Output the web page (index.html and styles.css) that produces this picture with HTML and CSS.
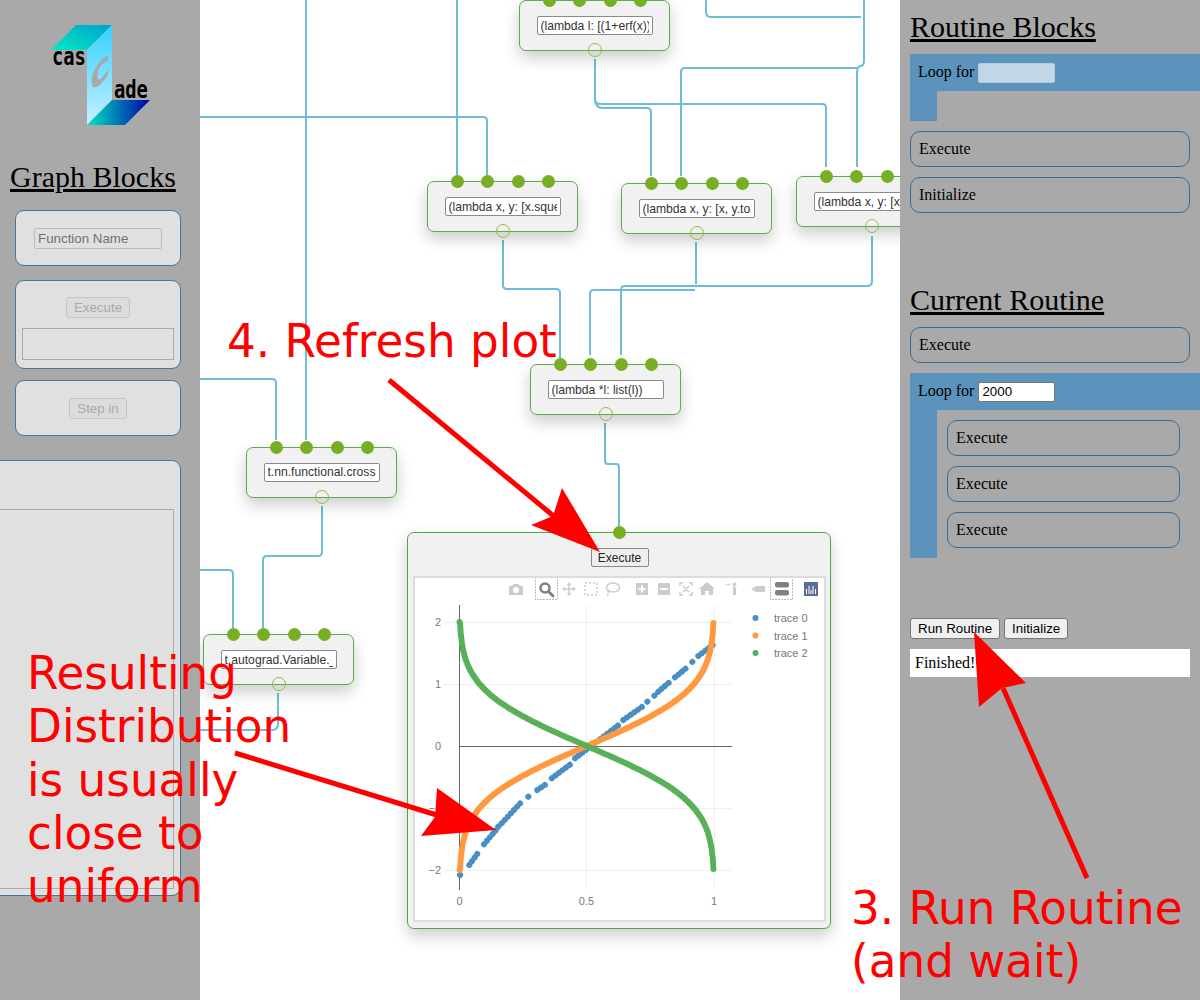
FILE: index.html
```html
<!DOCTYPE html>
<html lang="en">
  <head>
    <meta charset="UTF-8" />
    <meta name="viewport" content="width=device-width, initial-scale=1.0" />
    <title>Cascade</title>
    <link rel="stylesheet" href="styles.css">
  </head>
  <body>
    <div class="app">
      <aside class="graph-blocks">
        <svg class="logo" width="100" height="100" viewBox="50 25 100 100">
          <defs>
            <linearGradient id="logoTop" x1="0" y1="1" x2="1" y2="0">
              <stop offset="0" stop-color="#00ecc4" />
              <stop offset="1" stop-color="#00a0cc" />
            </linearGradient>
            <linearGradient id="logoFace" x1="0" y1="0" x2="0" y2="1">
              <stop offset="0" stop-color="#35d0ff" />
              <stop offset="1" stop-color="#c8f0ff" />
            </linearGradient>
            <linearGradient id="logoBottom" x1="0" y1="0" x2="1" y2="0">
              <stop offset="0" stop-color="#00e8c4" />
              <stop offset="1" stop-color="#0000a8" />
            </linearGradient>
          </defs>
          <polygon points="51,50 76,25 112,25 87,50" fill="url(#logoTop)" />
          <polygon points="87,50 112,25 112,100 87,125" fill="url(#logoFace)" />
          <polygon points="87,125 112,100 150,100 125,125" fill="url(#logoBottom)" />
          <text class="logo-word" transform="matrix(1 0 0 1.280 52 65)">cas</text>
          <text class="logo-word" transform="matrix(1 0 0 1.280 114 98)">ade</text>
          <text class="logo-c" transform="matrix(1 -1 0 1.160 91 93)">C</text>
        </svg>
        <h2 class="side-title">Graph Blocks</h2>
        <div class="block-card card-name">
          <input class="name-input" type="text" placeholder="Function Name" />
        </div>
        <div class="block-card card-exec">
          <button class="dim-btn" disabled>Execute</button>
          <div class="exec-box"></div>
        </div>
        <div class="block-card card-step">
          <button class="dim-btn" disabled>Step in</button>
        </div>
        <div class="block-card card-plot">
          <div class="plot-box"></div>
        </div>
      </aside>

      <main class="canvas">
        <svg class="wires" width="700" height="1000" viewBox="200 0 700 1000">
          <path d="M457 0V175" />
          <path d="M200 117H483q4 0 4 4V175" />
          <path d="M595 59V99q0 5 5 5H822q4 0 4 4V167" />
          <path d="M595 99q0 9 8 9H647q4 0 4 4V176" />
          <path d="M681 176V72q0 -4 4 -4H857" />
          <path d="M857 167V72q0 -4 3 -6q4 0 4 -5V0" />
          <path d="M706 0V12q0 5 5 5H861" />
          <path d="M306 0V440" />
          <path d="M200 379H272q4 0 4 4V440" />
          <path d="M322 506V552q0 4 -4 4H267q-4 0 -4 4V628" />
          <path d="M200 570H229q4 0 4 4V628" />
          <path d="M278 693V724q0 6 -6 6H200" />
          <path d="M503 240V285q0 4 4 4H556q4 0 4 4V358" />
          <path d="M696 242V284" />
          <path d="M695 290H594q-4 0 -4 4V355" />
          <path d="M872 236V281q0 5 -5 5H625q-4 0 -4 4V355" />
          <path d="M605 423V461q0 3 3 3H616q3 0 3 3V526" />
        </svg>

        <div class="node node-a">
          <div class="ports"><span></span><span></span><span></span><span></span></div>
          <input class="fn-input" type="text" value="(lambda l: [(1+erf(x))/2 for x in l])" />
          <span class="out-port"></span>
        </div>
        <div class="node node-b">
          <div class="ports"><span></span><span></span><span></span><span></span></div>
          <input class="fn-input" type="text" value="(lambda x, y: [x.squeeze(), y])" />
          <span class="out-port"></span>
        </div>
        <div class="node node-c">
          <div class="ports"><span></span><span></span><span></span><span></span></div>
          <input class="fn-input" type="text" value="(lambda x, y: [x, y.tolist()])" />
          <span class="out-port"></span>
        </div>
        <div class="node node-d">
          <div class="ports"><span></span><span></span><span></span><span></span></div>
          <input class="fn-input" type="text" value="(lambda x, y: [x, y])" />
          <span class="out-port"></span>
        </div>
        <div class="node node-e">
          <div class="ports"><span></span><span></span><span></span><span></span></div>
          <input class="fn-input" type="text" value="(lambda *l: list(l))" />
          <span class="out-port"></span>
        </div>
        <div class="node node-f">
          <div class="ports"><span></span><span></span><span></span><span></span></div>
          <input class="fn-input" type="text" value="t.nn.functional.cross" />
          <span class="out-port"></span>
        </div>
        <div class="node node-g">
          <div class="ports"><span></span><span></span><span></span><span></span></div>
          <input class="fn-input" type="text" value="t.autograd.Variable._" />
          <span class="out-port"></span>
        </div>

        <div class="plot-node">
          <span class="plot-port"></span>
          <button class="plot-exec">Execute</button>
          <div class="plot-area">
            <svg class="plot-svg" width="411" height="343" viewBox="414 577 411 343">
              <defs>
                <path id="curve" d="M459.500 870L460.100 869 460.700 858.900 462 848 463.300 841.100 465.800 831.900 469.100 823.900 472.200 818.100 478.600 809.100 484.900 802.200 491.300 796.400 497.600 791.400 504 787 510.400 782.900 523.100 775.600 535.800 769 548.500 762.900 561.300 757.100 574 751.500 586.750 746 599.500 740.500 612.200 734.900 625 729.100 637.700 723 650.400 716.400 663.100 709.100 669.500 705 675.900 700.600 682.200 695.600 688.600 689.800 694.900 682.900 701.300 673.900 704.400 668.100 707.700 660.100 710.200 650.900 711.500 644 712.800 633.100 713.400 623 714 622" />
              </defs>

              <!-- toolbar -->
              <g class="tool-off">
                <path d="M509 586h3l1.500 -2h5l1.500 2h3v9h-14z" />
                <circle cx="516" cy="590" r="3" fill="#fff" />
                <path d="M569 582l2.500 3h-1.800v3.300h3.300v-1.800l3 2.500 -3 2.500v-1.800h-3.300v3.300h1.800l-2.500 3 -2.500 -3h1.800v-3.300h-3.300v1.800l-3 -2.500 3 -2.500v1.800h3.300v-3.300h-1.800z" />
                <path d="M636 583h12v12h-12zM641 585.500v2.500h-2.500v2h2.500v2.500h2v-2.500h2.500v-2h-2.500v-2.500z" fill-rule="evenodd" />
                <path d="M658 583h12v12h-12zM660.500 588v2h7v-2z" fill-rule="evenodd" />
                <path d="M707 582l8 7h-2v6h-4v-4h-4v4h-4v-6h-2z" />
                <path d="M765 586h-9l-5 3 5 3h9z" />
                <rect x="733" y="587" width="3" height="8" />
                <circle cx="734.500" cy="584.500" r="2" />
                <circle cx="729" cy="584.500" r="1" />
                <circle cx="726.500" cy="584.500" r="1" />
              </g>
              <g class="tool-line">
                <rect x="585" y="583" width="12" height="12" stroke-dasharray="2 2" />
                <ellipse cx="613" cy="587.500" rx="6.500" ry="4.500" />
                <path d="M608 591q1 3 -1 5" stroke-dasharray="2 1" />
                <path d="M680 586v-3h3M689 583h3v3M692 592v3h-3M683 595h-3v-3M683 586l6 6M689 586l-6 6" />
              </g>
              <rect class="tool-box" x="535.500" y="577.500" width="22" height="22" />
              <rect class="tool-box" x="770.500" y="577.500" width="22" height="22" />
              <g class="tool-on">
                <circle cx="545" cy="588" r="4.500" fill="none" stroke="#808080" stroke-width="2.500" />
                <path d="M548.500 591.500l4.500 4.500" fill="none" stroke="#808080" stroke-width="3" stroke-linecap="round" />
                <rect x="775" y="582" width="14" height="5.500" rx="2" />
                <rect x="775" y="590" width="14" height="5.500" rx="2" />
              </g>
              <rect x="804" y="582" width="14" height="14" fill="#5b6e95" />
              <path d="M806.500 589v5M809 586v8M811 590v4M813 586v8M815.500 589v5" stroke="#fff" stroke-width="1" />

              <!-- grid -->
              <g class="grid">
                <path d="M444 622.500H732M444 684.500H732M444 808.500H732M444 870.500H732" />
                <path d="M586.500 605V890M714.500 605V890" />
              </g>
              <path class="zero" d="M459.500 605V890M459 746.500H732" />

              <!-- traces -->
              <path class="trace trace-blue" d="M460 875L462.700 871.700M469.300 865L477.700 853.300M484 844.300L496 830M498.300 826.700L498.400 826.600M501.700 823.300L521.700 801.700M528.300 796.700L528.400 796.600M537.300 790L548.300 782.700M551.700 778.300L571.700 763.300M575 758.300L620 724M623.300 720L643.300 706M647.300 701.700L647.400 701.600M654.300 695.700L654.400 695.600M658.300 691.700L670 681.700M675 677.300L686.700 667.700M692.300 662L692.400 661.900M698.300 656L714 644" />
              <use class="trace trace-orange" href="#curve" />
              <use class="trace trace-green" href="#curve" transform="matrix(1 0 0 -1 0 1492)" />

              <!-- tick labels -->
              <g class="tick">
                <text class="tick-y" x="441" y="626">2</text>
                <text class="tick-y" x="441" y="688">1</text>
                <text class="tick-y" x="441" y="750">0</text>
                <text class="tick-y" x="441" y="812">−1</text>
                <text class="tick-y" x="441" y="874">−2</text>
                <text class="tick-x" x="459.500" y="905">0</text>
                <text class="tick-x" x="586.500" y="905">0.5</text>
                <text class="tick-x" x="714" y="905">1</text>
              </g>

              <!-- legend -->
              <circle cx="755.500" cy="618" r="3" fill="#4a8fc4" />
              <circle cx="755.500" cy="635.500" r="3" fill="#ff983e" />
              <circle cx="755.500" cy="653" r="3" fill="#58b058" />
              <g class="legend">
                <text x="774" y="622">trace 0</text>
                <text x="774" y="640">trace 1</text>
                <text x="774" y="657">trace 2</text>
              </g>
            </svg>
          </div>
        </div>
      </main>

      <aside class="routine-panel">
        <h2 class="side-title">Routine Blocks</h2>
        <div class="loop">
          <div class="loop-head">Loop for <input class="loop-input loop-input-dim" type="text" /></div>
          <div class="loop-body loop-body-empty"></div>
        </div>
        <div class="routine-item">Execute</div>
        <div class="routine-item">Initialize</div>

        <h2 class="side-title current-title">Current Routine</h2>
        <div class="routine-item">Execute</div>
        <div class="loop">
          <div class="loop-head">Loop for <input class="loop-input" type="text" value="2000" /></div>
          <div class="loop-body">
            <div class="routine-item">Execute</div>
            <div class="routine-item">Execute</div>
            <div class="routine-item">Execute</div>
          </div>
        </div>

        <div class="run-row">
          <button class="run-btn">Run Routine</button>
          <button class="run-btn">Initialize</button>
        </div>
        <div class="run-result">Finished!</div>
      </aside>
    </div>

    <!-- red notes painted on top of the screenshot -->
    <svg class="arrows" width="1200" height="1000" viewBox="0 0 1200 1000">
      <path d="M389 380L556 518M235 753L440 816M1087 878L1003 688" />
      <polygon points="562,488 600,552 531,525 553,516" />
      <polygon points="437,788 496,830 421,836 435,817" />
      <polygon points="974,632 1026,683 1002,688 979,707" />
    </svg>
    <div class="note note-refresh">4. Refresh plot</div>
    <div class="note note-dist">Resulting<br />Distribution<br />is usually<br />close to<br />uniform</div>
    <div class="note note-run">3. Run Routine<br />(and wait)</div>
  </body>
</html>
```

FILE: styles.css
```css
body {
  margin: 0;
  font-family: "Liberation Serif", serif;
  font-size: 16px;
  color: #000;
  background: #fff;
}

.app {
  display: grid;
  grid-template-columns: 200px 700px 300px;
  width: 1200px;
  height: 1000px;
  overflow: hidden;
}

/* sidebars */
.graph-blocks,
.routine-panel {
  background-color: #a9a9a9;
  height: 1000px;
  overflow: hidden;
  box-sizing: border-box;
}

.side-title {
  margin: 0 0 10px;
  font-size: 30px;
  font-weight: normal;
  line-height: 34px;
  text-decoration: underline;
}

.graph-blocks {
  padding: 25px 19px 0 15px;
}

.graph-blocks .side-title {
  margin: 35px 0 16px -5px;
  white-space: nowrap;
}

.logo {
  display: block;
  margin-left: 35px;
}

.logo-word {
  font-family: "DejaVu Sans Mono", monospace;
  font-size: 18.800px;
  font-weight: bold;
  fill: #000;
}

.logo-c {
  font-family: "DejaVu Sans", sans-serif;
  font-size: 25px;
  font-weight: bold;
  fill: #a9a9a9;
  stroke: #a9a9a9;
  stroke-width: 0.800;
}

.block-card {
  display: flex;
  flex-direction: column;
  align-items: center;
  justify-content: center;
  box-sizing: border-box;
  width: 166px;
  margin-bottom: 14px;
  background-color: #e0e0e0;
  border: 1px solid #44779a;
  border-radius: 9px;
}

.card-name {
  height: 56px;
}

.card-exec {
  height: 89px;
  margin-bottom: 11px;
  padding: 8px 6px 0;
}

.card-step {
  height: 56px;
  margin-bottom: 24px;
}

.card-plot {
  display: block;
  width: 206px;
  height: 436px;
  margin-left: -40px;
  padding: 48px 6px 6px 0;
}

.name-input {
  box-sizing: border-box;
  width: 128px;
  height: 21px;
  padding: 1px 3px;
  font-family: "Liberation Sans", sans-serif;
  font-size: 13.33px;
  background-color: #e0e0e0;
  border: 1px solid #bbb;
  border-radius: 2px;
}

.name-input::placeholder {
  color: #707070;
}

.dim-btn {
  box-sizing: border-box;
  height: 21px;
  padding: 1px 7px;
  font-family: "Liberation Sans", sans-serif;
  font-size: 13.33px;
  color: #aaa;
  background-color: #dcdcdc;
  border: 1px solid #c4c4c4;
  border-radius: 3px;
}

.exec-box {
  box-sizing: border-box;
  width: 152px;
  height: 32px;
  margin-top: 10px;
  border: 1px solid #aaa;
}

.plot-box {
  box-sizing: border-box;
  height: 380px;
  border: 1px solid #aaa;
}

/* graph canvas */
.canvas {
  position: relative;
  overflow: hidden;
  height: 1000px;
}

.wires {
  position: absolute;
  left: 0;
  top: 0;
}

.wires path {
  fill: none;
  stroke: #6dbcd8;
  stroke-width: 2;
}

.node {
  position: absolute;
  box-sizing: border-box;
  display: flex;
  align-items: center;
  justify-content: center;
  width: 151px;
  height: 51px;
  background-color: #f1f1f1;
  border: 1px solid #5cad4a;
  border-radius: 7px;
  box-shadow: 0 7px 16px rgba(0, 0, 0, 0.2);
}

.node-a { left: 319px; top: 0; }
.node-b { left: 227px; top: 181px; }
.node-c { left: 421px; top: 183px; }
.node-d { left: 596px; top: 176px; }
.node-e { left: 330px; top: 364px; }
.node-f { left: 46px; top: 446.500px; }
.node-g { left: 3px; top: 634px; }

.ports {
  position: absolute;
  left: 22.500px;
  top: -7px;
  display: flex;
  gap: 17.500px;
}

.ports span {
  width: 13px;
  height: 13px;
  background-color: #78ae24;
  border-radius: 50%;
}

.out-port {
  position: absolute;
  left: 67.500px;
  bottom: -7px;
  box-sizing: border-box;
  width: 14px;
  height: 14px;
  border: 1px solid #8fbb4a;
  border-radius: 50%;
}

.fn-input {
  box-sizing: border-box;
  width: 116px;
  height: 19px;
  padding: 1px 3px;
  font-family: "Liberation Sans", sans-serif;
  font-size: 12.150px;
  color: #333;
  background-color: #fff;
  border: 1px solid #8a8a8a;
  border-radius: 2px;
}

/* plot block */
.plot-node {
  position: absolute;
  left: 207px;
  top: 532px;
  box-sizing: border-box;
  width: 424px;
  height: 397px;
  padding: 15px 5px 7px 6px;
  display: flex;
  flex-direction: column;
  align-items: center;
  background-color: #f1f1f1;
  border: 1px solid #4ca844;
  border-radius: 7px;
  box-shadow: 0 7px 16px rgba(0, 0, 0, 0.2);
}

.plot-port {
  position: absolute;
  left: 205px;
  top: -7px;
  width: 13px;
  height: 13px;
  background-color: #78ae24;
  border-radius: 50%;
}

.plot-exec {
  box-sizing: border-box;
  min-width: 58px;
  height: 19px;
  padding: 0 6px;
  font-family: "Liberation Sans", sans-serif;
  font-size: 12px;
  color: #222;
  background-color: #efefef;
  border: 1px solid #888;
  border-radius: 2px;
}

.plot-area {
  box-sizing: border-box;
  width: 411px;
  height: 344px;
  margin-top: 10px;
  background-color: #fff;
  outline: 2px solid #dcdcdc;
  outline-offset: -1px;
}

.plot-svg {
  display: block;
  font-family: "Liberation Sans", sans-serif;
  font-size: 11px;
}

.tool-off { fill: #ccc; }
.tool-on { fill: #808080; }

.tool-line {
  fill: none;
  stroke: #ccc;
  stroke-width: 1.500;
}

.tool-box {
  fill: none;
  stroke: #3f9f3f;
  stroke-width: 1;
  stroke-dasharray: 1 2;
}

.grid path {
  fill: none;
  stroke: #eee;
  stroke-width: 1;
}

.zero {
  fill: none;
  stroke: #666;
  stroke-width: 1;
}

.trace {
  fill: none;
  stroke-width: 6;
  stroke-linecap: round;
  stroke-linejoin: round;
  stroke-dasharray: 0 1.800;
}

.trace-blue {
  stroke: #4a8fc4;
  stroke-dasharray: 0.100 4.400;
}

.trace-orange { stroke: #ff983e; }
.trace-green { stroke: #58b058; }

.tick text {
  fill: #7a7a7a;
}

.tick-y { text-anchor: end; }
.tick-x { text-anchor: middle; }

.legend text {
  fill: #777;
}

/* routine panel */
.routine-panel {
  padding: 10px 10px 0;
}

.current-title {
  margin-top: 70px;
}

.routine-item {
  box-sizing: border-box;
  height: 36px;
  margin-bottom: 10px;
  padding: 0 8px;
  line-height: 34px;
  border: 1px solid #3a6d96;
  border-radius: 10px;
}

.loop {
  margin-right: -10px;
  margin-bottom: 10px;
}

.loop-head {
  height: 37px;
  padding-left: 8px;
  line-height: 36px;
  background-color: #5c93bc;
}

.loop-input {
  box-sizing: border-box;
  width: 77px;
  height: 20px;
  padding: 1px 3px;
  font-family: "Liberation Sans", sans-serif;
  font-size: 13.33px;
  background-color: #fff;
  border: 1px solid #777;
  border-radius: 2px;
}

.loop-input-dim {
  background-color: #c3d6e6;
  border-color: #b5c9da;
}

.loop-body {
  padding: 10px 20px 0 10px;
  height: 148px;
  box-sizing: border-box;
  border-left: 27px solid #5c93bc;
}

.loop-body-empty {
  height: 30px;
}

.run-row {
  display: flex;
  gap: 4px;
  margin-top: 60px;
}

.run-btn {
  box-sizing: border-box;
  height: 21px;
  padding: 1px 7px;
  font-family: "Liberation Sans", sans-serif;
  font-size: 13.33px;
  color: #000;
  background-color: #efefef;
  border: 1px solid #777;
  border-radius: 3px;
}

.run-result {
  height: 28px;
  margin-top: 10px;
  padding-left: 5px;
  line-height: 28px;
  background-color: #fff;
}

/* red notes */
.arrows {
  position: absolute;
  left: 0;
  top: 0;
}

.arrows path {
  fill: none;
  stroke: #f00;
  stroke-width: 5;
}

.arrows polygon {
  fill: #f00;
}

.note {
  position: absolute;
  font-family: "DejaVu Sans", sans-serif;
  font-size: 45.300px;
  line-height: 53.300px;
  color: #f00;
  white-space: nowrap;
}

.note-refresh { left: 227px; top: 315px; }
.note-dist { left: 27px; top: 647px; }
.note-run { left: 851px; top: 882px; }
```
